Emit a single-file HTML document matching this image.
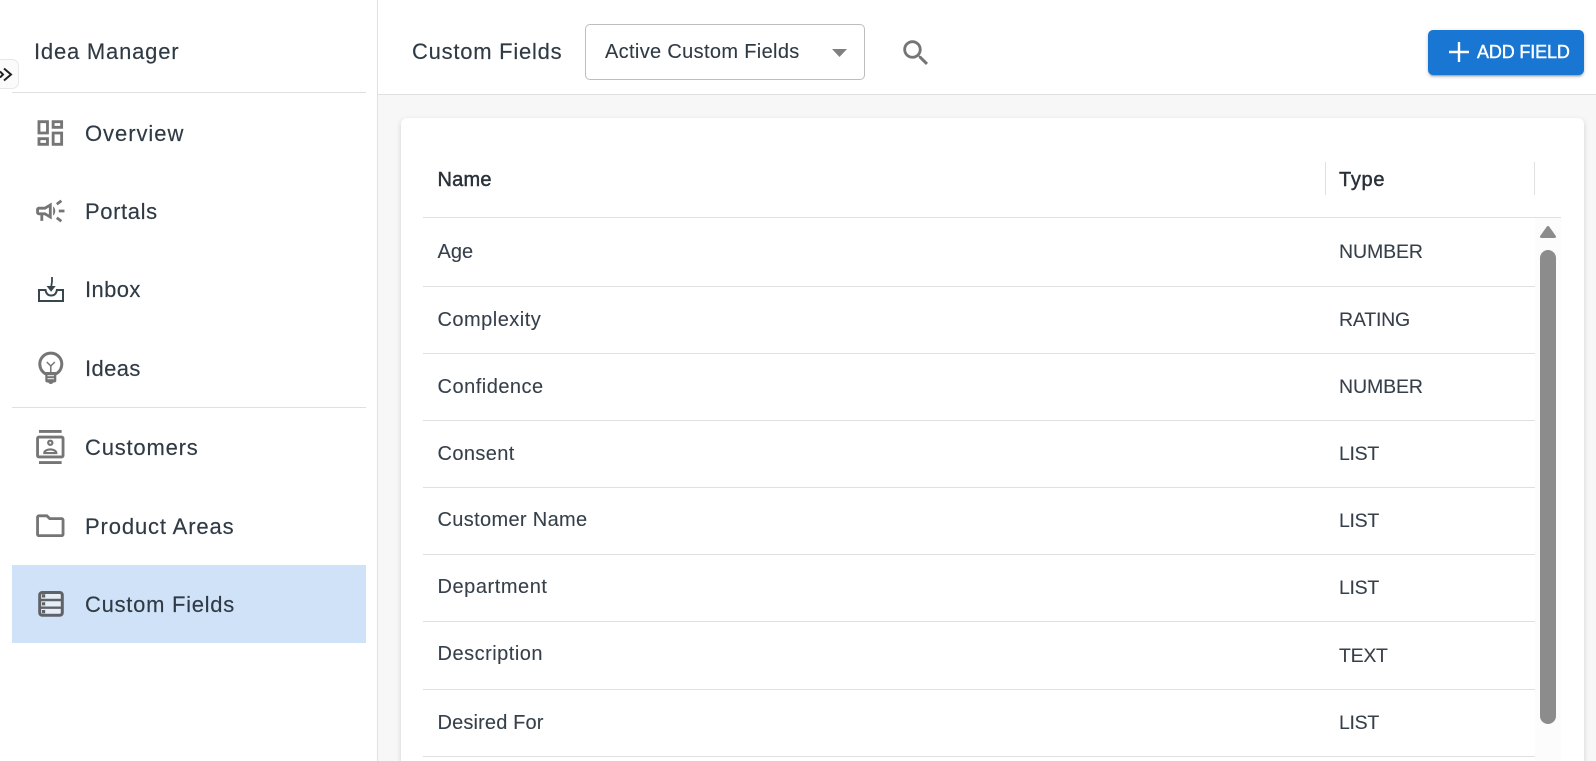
<!DOCTYPE html>
<html lang="en"><head><meta charset="utf-8"><title>Custom Fields</title>
<style>
*{box-sizing:border-box}
html,body{margin:0;padding:0;width:1596px;height:761px;overflow:hidden;background:#fff;font-family:"Liberation Sans",Arial,sans-serif;color:#37424c}
#root{position:relative;width:1596px;height:761px;overflow:hidden;background:#fff}
.a{position:absolute}
.t{position:absolute;white-space:nowrap;line-height:1}
.nav{font-size:22px;left:85px;color:#2f3a44;-webkit-text-stroke:.15px #2f3a44}
.nm{font-size:20px;left:437.5px;color:#36404a;-webkit-text-stroke:.1px #36404a}
.ty{font-size:19.5px;left:1339px;color:#36404a;-webkit-text-stroke:.1px #36404a}
.hd{font-size:20px;color:#2a3138;-webkit-text-stroke:.45px #2a3138}
.ln{position:absolute;height:1px;background:#e0e0e0}
.rl{left:423px;width:1112px}
</style></head><body>
<div id="root">
<div class="a" style="left:378px;top:95px;width:1218px;height:666px;background:#f7f7f7"></div>
<div class="a" style="left:377px;top:0;width:1px;height:761px;background:#e0e0e0"></div>
<div class="ln" style="left:378px;top:94px;width:1218px"></div>

<!-- sidebar -->
<div class="t nav" style="left:34px;top:41px;letter-spacing:.8px">Idea Manager</div>
<div class="ln" style="left:12px;top:92px;width:354px"></div>
<div class="ln" style="left:12px;top:407px;width:354px"></div>
<div class="a" style="left:12px;top:565px;width:354px;height:78px;background:#cfe2f8"></div>
<div class="a" style="left:0;top:59px;width:19px;height:30px;border:1px solid #e8e8e8;border-left:0;border-radius:0 7px 7px 0;background:#fbfbfb"></div>

<svg class="a" style="left:0;top:0" width="377" height="761" viewBox="0 0 377 761">
<g fill="none" stroke="#222" stroke-width="2"><path d="M0 71.500L3 74.500L0 77.500"/><path d="M4 68.500L11 74.500L4 80.500"/></g>
<g fill="#757575">
<path transform="translate(33.3 116) scale(1.4167)" d="M19 5v2h-4V5h4M9 5v6H5V5h4m10 8v6h-4v-6h4M9 17v2H5v-2h4M21 3h-8v6h8V3zM11 3H3v10h8V3zm10 8h-8v10h8V11zm-10 4H3v6h8v-6z"/>
<path transform="translate(33.3 194) scale(1.4167)" d="M18 11v2h4v-2h-4zm-2 6.61c.96.71 2.21 1.65 3.2 2.39.4-.53.8-1.07 1.2-1.6-.99-.74-2.24-1.68-3.2-2.4-.4.54-.8 1.08-1.2 1.61zM20.4 5.6c-.4-.53-.8-1.07-1.2-1.6-.99.74-2.24 1.68-3.2 2.4.4.53.8 1.07 1.2 1.6.96-.72 2.21-1.65 3.2-2.4zM4 9c-1.1 0-2 .9-2 2v2c0 1.1.9 2 2 2h1v4h2v-4h1l5 3V6L8 9H4zm5.03 1.71L11 9.53v4.94l-1.97-1.18-.48-.29H4v-2h4.55l.48-.29zM15.5 12c0-1.33-.58-2.53-1.5-3.35v6.69c.92-.81 1.5-2.01 1.5-3.34z"/>
<path transform="translate(33.3 430) scale(1.4167)" d="M20 0H4v2h16V0zM4 24h16v-2H4v2zM20 4H4c-1.1 0-2 .9-2 2v12c0 1.1.9 2 2 2h16c1.1 0 2-.9 2-2V6c0-1.1-.9-2-2-2zm0 14H4V6h16v12zm-8-6.75c1.24 0 2.25-1.01 2.25-2.25S13.24 6.75 12 6.75 9.75 7.76 9.75 9s1.01 2.25 2.25 2.25zm0-3c.41 0 .75.34.75.75s-.34.75-.75.75-.75-.34-.75-.75.34-.75.75-.75zM17 15.99c0-2.09-3.31-2.99-5-2.99s-5 .9-5 2.99V17h10v-1.01zm-8.19-.49c.61-.52 2.03-1 3.19-1 1.17 0 2.59.48 3.2 1H8.81z"/>
<path transform="translate(33.3 508.7) scale(1.4167)" d="M9.17 6l2 2H20v10H4V6h5.17M10 4H4c-1.1 0-1.99.9-1.99 2L2 18c0 1.1.9 2 2 2h16c1.1 0 2-.9 2-2V8c0-1.1-.9-2-2-2h-8l-2-2z"/>
</g>
<!-- inbox -->
<g fill="none" stroke="#37474f" stroke-width="2">
<path d="M39 290h6.500c.6 3.600 2.600 5.500 5.700 5.500s5.100-1.900 5.700-5.500h6.100v11h-24z"/>
<path d="M52 277v4c0 3-1 4-1 8" stroke-width="1.800"/>
</g>
<path d="M46.500 286l4.600 5.800 4.600-5.800z" fill="#37474f"/>
<!-- bulb -->
<path fill="none" stroke="#757575" stroke-width="3" d="M46 374A11 11 0 1 1 55.600 374"/>
<path fill="none" stroke="#757575" stroke-width="1.500" d="M46.800 362l4 4 4-4M50.800 366v6"/>
<path d="M45.300 372h11v8.500c0 1.300-.8 2-2 2h-1c-.6 1-1.400 1.500-2.500 1.500s-1.900-.5-2.500-1.500h-1c-1.200 0-2-.7-2-2z" fill="#757575"/>
<path d="M47.500 375h6.500v1.300h-6.500zM47.500 378h6.500v1.300h-6.500z" fill="#ddd"/>
<!-- custom fields -->
<rect x="39.700" y="592.500" width="22.600" height="22.800" rx="2.500" fill="#e6eff9" stroke="#5f6368" stroke-width="3"/>
<path d="M39.700 600h22.600M39.700 607.700h22.600" stroke="#5f6368" stroke-width="2.400" fill="none"/>
<path d="M42 594.300h3.200v3.200H42zM42 602.200h3.200v3.200H42zM42 610h3.200v3.200H42z" fill="#5f6368"/>
</svg>

<div class="t nav" style="top:123.400px;letter-spacing:.95px">Overview</div>
<div class="t nav" style="top:200.500px;letter-spacing:.6px">Portals</div>
<div class="t nav" style="top:279.400px;letter-spacing:.4px">Inbox</div>
<div class="t nav" style="top:358.400px;letter-spacing:.4px">Ideas</div>
<div class="t nav" style="top:437.400px;letter-spacing:.8px">Customers</div>
<div class="t nav" style="top:516.400px;letter-spacing:.87px">Product Areas</div>
<div class="t nav" style="top:594px;letter-spacing:.72px">Custom Fields</div>

<!-- top bar -->
<div class="t nav" style="left:412px;top:41.400px;letter-spacing:.75px">Custom Fields</div>
<div class="a" style="left:585px;top:24px;width:280px;height:56px;border:1px solid #bdbdbd;border-radius:5px;background:#fff"></div>
<div class="t" style="left:605px;top:42px;font-size:20px;letter-spacing:.34px;color:#2f3a44;-webkit-text-stroke:.1px #2f3a44">Active Custom Fields</div>
<svg class="a" style="left:832px;top:49px" width="15" height="8" viewBox="0 0 15 8"><path d="M0 0h15L7.500 8z" fill="#808080"/></svg>
<svg class="a" style="left:899px;top:36px" width="34" height="34" viewBox="0 0 24 24"><path fill="#757575" d="M15.500 14h-.79l-.28-.27C15.410 12.590 16 11.110 16 9.500 16 5.910 13.090 3 9.500 3S3 5.910 3 9.500 5.910 16 9.500 16c1.610 0 3.090-.59 4.230-1.570l.27.28v.79l5 4.990L20.490 19l-4.990-5zm-6 0C7.010 14 5 11.990 5 9.500S7.010 5 9.500 5 14 7.010 14 9.500 11.990 14 9.500 14z"/></svg>
<div class="a" style="left:1428px;top:30px;width:156px;height:45px;background:#1976d2;border-radius:5px;box-shadow:0 3px 1px -2px rgba(0,0,0,.2),0 2px 2px rgba(0,0,0,.14),0 1px 5px rgba(0,0,0,.12)"></div>
<svg class="a" style="left:1449px;top:42px" width="20" height="20" viewBox="0 0 20 20"><path d="M8.800 0h2.400v8.800H20v2.400h-8.800V20H8.800v-8.800H0V8.800h8.800z" fill="#fff"/></svg>
<div class="t" style="left:1477px;top:43.100px;font-size:18px;letter-spacing:-.15px;color:#fff;-webkit-text-stroke:.4px #fff">ADD FIELD</div>

<!-- card -->
<div class="a" style="left:401px;top:118px;width:1183px;height:643px;background:#fff;border-radius:6px 6px 0 0;box-shadow:0 2px 6px rgba(0,0,0,.16);clip-path:inset(-8px -8px 0 -8px)"></div>
<div class="t hd" style="left:437.500px;top:170px;letter-spacing:.2px">Name</div>
<div class="t hd" style="left:1339px;top:170px;letter-spacing:.7px">Type</div>
<div class="a" style="left:1325px;top:162px;width:1px;height:33px;background:#e0e0e0"></div>
<div class="a" style="left:1534px;top:162px;width:1px;height:33px;background:#e0e0e0"></div>
<div class="a" style="left:1535px;top:218px;width:26px;height:543px;background:#fcfcfc"></div>
<div class="ln" style="left:423px;top:217px;width:1138px"></div>
<div class="ln rl" style="top:286px"></div>
<div class="ln rl" style="top:353px"></div>
<div class="ln rl" style="top:420px"></div>
<div class="ln rl" style="top:487px"></div>
<div class="ln rl" style="top:554px"></div>
<div class="ln rl" style="top:621px"></div>
<div class="ln rl" style="top:689px"></div>
<div class="ln rl" style="top:756px"></div>
<svg class="a" style="left:1540px;top:226px" width="16" height="12" viewBox="0 0 16 12"><path d="M8 0c.6 0 1 .3 1.300.7l6.400 9c.6.9.1 2.300-1 2.300H1.300C.2 12-.3 10.600.3 9.700l6.400-9C7 .3 7.400 0 8 0z" fill="#8c8c8c"/></svg>
<div class="a" style="left:1540px;top:250px;width:16px;height:474px;border-radius:8px;background:#8c8c8c"></div>

<div class="t nm" style="top:242px">Age</div><div class="t ty" style="top:242.500px;letter-spacing:-.1px">NUMBER</div>
<div class="t nm" style="top:309.500px;letter-spacing:.48px">Complexity</div><div class="t ty" style="top:310.500px;letter-spacing:-.2px">RATING</div>
<div class="t nm" style="top:377px;letter-spacing:.5px">Confidence</div><div class="t ty" style="top:377.500px;letter-spacing:-.1px">NUMBER</div>
<div class="t nm" style="top:444px;letter-spacing:.38px">Consent</div><div class="t ty" style="top:444.500px;letter-spacing:-.3px">LIST</div>
<div class="t nm" style="top:510px;letter-spacing:.34px">Customer Name</div><div class="t ty" style="top:511.500px;letter-spacing:-.3px">LIST</div>
<div class="t nm" style="top:577px;letter-spacing:.55px">Department</div><div class="t ty" style="top:578.500px;letter-spacing:-.3px">LIST</div>
<div class="t nm" style="top:644px;letter-spacing:.5px">Description</div><div class="t ty" style="top:646.500px;letter-spacing:-.3px">TEXT</div>
<div class="t nm" style="top:713px;letter-spacing:.15px">Desired For</div><div class="t ty" style="top:714px;letter-spacing:-.3px">LIST</div>
</div>
</body></html>
